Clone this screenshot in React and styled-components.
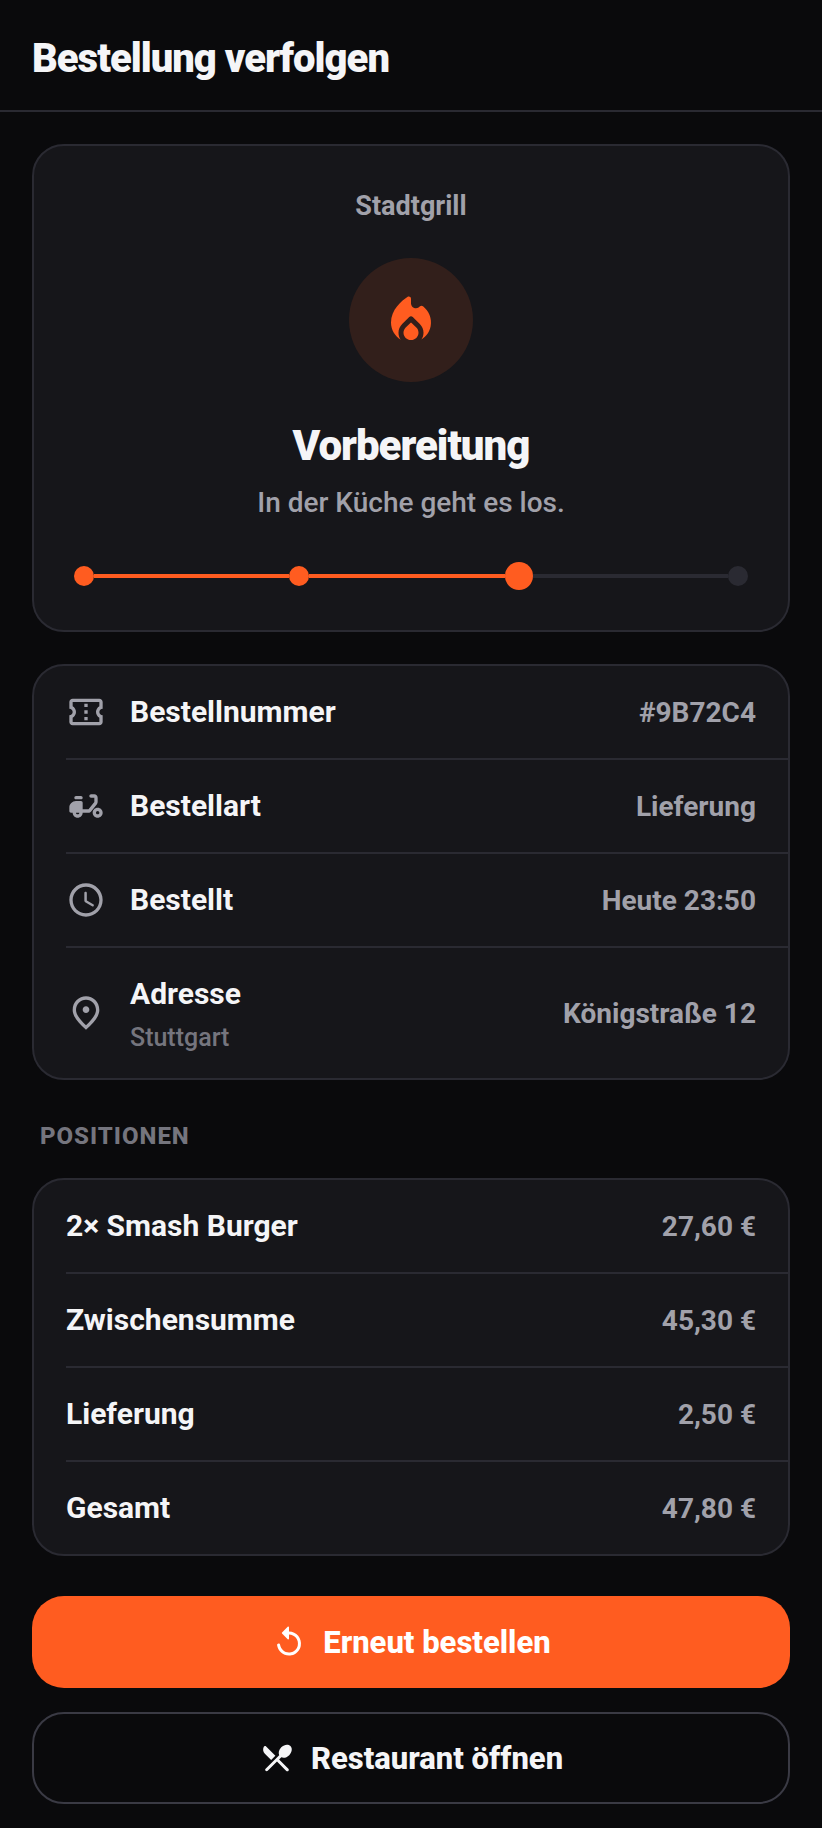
import React from 'react'
import styled, { createGlobalStyle } from 'styled-components'

const order = {
  restaurant: 'Stadtgrill',
  status: 'Vorbereitung',
  hint: 'In der Küche geht es los.',
  steps: ['Eingegangen', 'Bestätigt', 'Vorbereitung', 'Unterwegs'],
  currentStep: 2
}

const items = [
  { label: '2× Smash Burger', value: '27,60 €' },
  { label: 'Zwischensumme', value: '45,30 €' },
  { label: 'Lieferung', value: '2,50 €' },
  { label: 'Gesamt', value: '47,80 €' }
]

const Icon = ({ size, children }) => (
  <svg
    width={size}
    height={size}
    viewBox="0 0 24 24"
    fill="currentColor"
    aria-hidden="true"
  >
    {children}
  </svg>
)

const TicketIcon = () => (
  <Icon size={40}>
    <path d="M22 10V6c0-1.11-.9-2-2-2H4c-1.1 0-1.99.89-1.99 2v4c1.1 0 1.99.9 1.99 2s-.89 2-2 2v4c0 1.1.9 2 2 2h16c1.1 0 2-.9 2-2v-4c-1.1 0-2-.9-2-2s.9-2 2-2zm-2-1.46c-1.19.69-2 1.99-2 3.46s.81 2.77 2 3.46V18H4v-2.54c1.19-.69 2-1.99 2-3.46 0-1.48-.8-2.77-1.99-3.46L4 6h16v2.54zM11 15h2v2h-2zm0-4h2v2h-2zm0-4h2v2h-2z" />
  </Icon>
)

const ScooterIcon = () => (
  <Icon size={40}>
    <path d="M19 7c0-1.1-.9-2-2-2h-2c-.55 0-1 .45-1 1s.45 1 1 1h2v2.65L13.52 14H10v-4c0-.55-.45-1-1-1H6c-2.21 0-4 1.79-4 4v2c0 .55.45 1 1 1h1c0 1.66 1.34 3 3 3s3-1.34 3-3h3.52c.61 0 1.18-.28 1.56-.75l3.48-4.35c.28-.35.44-.8.44-1.25V7zM7 17c-.55 0-1-.45-1-1h2c0 .55-.45 1-1 1z" />
    <path d="M6 6h3c.55 0 1 .45 1 1s-.45 1-1 1H6c-.55 0-1-.45-1-1s.45-1 1-1zM19 13c-1.66 0-3 1.34-3 3s1.34 3 3 3 3-1.34 3-3-1.34-3-3-3zm0 4c-.55 0-1-.45-1-1s.45-1 1-1 1 .45 1 1-.45 1-1 1z" />
  </Icon>
)

const ClockIcon = () => (
  <Icon size={40}>
    <path d="M11.99 2C6.47 2 2 6.48 2 12s4.47 10 9.99 10C17.52 22 22 17.52 22 12S17.52 2 11.99 2zM12 20c-4.42 0-8-3.58-8-8s3.58-8 8-8 8 3.58 8 8-3.58 8-8 8zm-.22-13h-.06c-.4 0-.72.32-.72.72v4.72c0 .35.18.68.49.86l4.15 2.49c.34.2.78.1.98-.24.21-.34.1-.79-.25-.99l-3.87-2.3V7.72c0-.4-.32-.72-.72-.72z" />
  </Icon>
)

const PinIcon = () => (
  <Icon size={40}>
    <path d="M12 12c-1.1 0-2-.9-2-2s.9-2 2-2 2 .9 2 2-.9 2-2 2zm6-1.8C18 6.57 15.35 4 12 4s-6 2.57-6 6.2c0 2.34 1.95 5.44 6 9.14 4.05-3.7 6-6.8 6-9.14zM12 2c4.2 0 8 3.22 8 8.2 0 3.32-2.67 7.25-8 11.8-5.33-4.55-8-8.48-8-11.8C4 5.22 7.8 2 12 2z" />
  </Icon>
)

const FlameIcon = () => (
  <Icon size={60}>
    <path d="M12.35 13.25c-.19-.19-.5-.19-.7 0l-1.78 1.74C9.31 15.55 9 16.28 9 17.06 9 18.68 10.35 20 12 20s3-1.32 3-2.94c0-.78-.31-1.52-.87-2.07z" />
    <path d="M16.8 6.5c-.34-.3-.9-.27-1.2.02C14.38 8.02 12 7.19 12 5.3V3.48c0-.77-.86-1.05-1.46-.67C8.2 4.4 4 7.9 4 13c0 2.92 1.56 5.47 3.89 6.86-.56-.79-.89-1.76-.89-2.8 0-1.32.52-2.56 1.47-3.5l2.83-2.78c.39-.38 1.01-.38 1.4 0l2.83 2.79c.95.93 1.47 2.17 1.47 3.5 0 1.02-.31 1.96-.85 2.75 1.89-1.15 3.29-3.06 3.71-5.3.58-3.15-.72-6.15-3.06-8.02z" />
  </Icon>
)

const ReplayIcon = () => (
  <Icon size={36}>
    <path d="M12 5V2.21c0-.45-.54-.67-.85-.35l-3.8 3.79c-.2.2-.2.51 0 .71l3.79 3.79c.32.31.86.09.86-.36V7c3.73 0 6.68 3.42 5.86 7.29-.47 2.27-2.31 4.1-4.57 4.57-3.57.75-6.75-1.7-7.23-5.01-.07-.48-.49-.85-.98-.85-.6 0-1.08.53-1 1.13.62 4.39 4.8 7.64 9.53 6.72 3.12-.61 5.63-3.12 6.24-6.24C20.84 9.48 16.94 5 12 5z" />
  </Icon>
)

const CutleryIcon = () => (
  <Icon size={36}>
    <path d="M8.1 13.34l2.83-2.83-6.19-6.18c-.48-.48-1.31-.35-1.61.27-.71 1.49-.45 3.32.78 4.56l4.19 4.18zm6.78-1.81c1.53.71 3.68.21 5.27-1.38 1.91-1.91 2.28-4.65.81-6.12-1.46-1.46-4.2-1.1-6.12.81-1.59 1.59-2.09 3.74-1.38 5.27L4.4 19.17c-.39.39-.39 1.02 0 1.41s1.02.39 1.41 0L12 14.41l6.18 6.18c.39.39 1.02.39 1.41 0s.39-1.02 0-1.41L13.41 13l1.47-1.47z" />
  </Icon>
)

const details = [
  { label: 'Bestellnummer', value: '#9B72C4', icon: <TicketIcon /> },
  { label: 'Bestellart', value: 'Lieferung', icon: <ScooterIcon /> },
  { label: 'Bestellt', value: 'Heute 23:50', icon: <ClockIcon /> },
  {
    label: 'Adresse',
    sub: 'Stuttgart',
    value: 'Königstraße 12',
    icon: <PinIcon />
  }
]

const Rows = ({ rows }) => (
  <StyledList>
    {rows.map(({ label, sub, value, icon }) => (
      <StyledRow key={label}>
        <dt>
          {icon}
          <span className="text">
            {label}
            {sub && <small>{sub}</small>}
          </span>
        </dt>
        <dd>{value}</dd>
      </StyledRow>
    ))}
  </StyledList>
)

const Progress = ({ steps, current }) => (
  <StyledProgress>
    {steps.map((step, index) => (
      <React.Fragment key={step}>
        {index > 0 && <StyledLine $done={index <= current} />}
        <StyledDot
          aria-label={step}
          aria-current={index === current ? 'step' : undefined}
          $done={index <= current}
          $current={index === current}
        />
      </React.Fragment>
    ))}
  </StyledProgress>
)

const App = () => {
  return (
    <>
      <GlobalStyle />
      <StyledHeader>
        <h1>Bestellung verfolgen</h1>
      </StyledHeader>
      <StyledMain>
        <StyledStatus>
          <p className="restaurant">{order.restaurant}</p>
          <div className="badge">
            <FlameIcon />
          </div>
          <h2>{order.status}</h2>
          <p>{order.hint}</p>
          <Progress steps={order.steps} current={order.currentStep} />
        </StyledStatus>
        <Rows rows={details} />
        <section>
          <StyledSectionTitle>Positionen</StyledSectionTitle>
          <Rows rows={items} />
        </section>
        <StyledActions>
          <StyledButton type="button" $primary>
            <ReplayIcon />
            Erneut bestellen
          </StyledButton>
          <StyledButton type="button">
            <CutleryIcon />
            Restaurant öffnen
          </StyledButton>
        </StyledActions>
      </StyledMain>
    </>
  )
}

const colors = {
  background: '#0a0a0c',
  card: '#16161a',
  line: '#2a2a32',
  outline: '#3a3a44',
  text: '#f5f5f7',
  muted: '#a1a1aa',
  faint: '#75757e',
  accent: '#ff5c20'
}

const GlobalStyle = createGlobalStyle`
  *,
  *::before {
    box-sizing: border-box;
  }

  body {
    margin: 0;
    background-color: ${colors.background};
    color: ${colors.text};
    font-family: Roboto, sans-serif;
  }

  h1,
  h2,
  h3,
  p,
  dl,
  dd {
    margin: 0;
  }

  svg {
    display: block;
    flex-shrink: 0;
  }
`

const StyledHeader = styled.header`
  padding: 36px 32px 28px;
  border-bottom: 2px solid ${colors.line};

  h1 {
    font-size: 40px;
    line-height: 46px;
    font-weight: 900;
    letter-spacing: -1px;
  }
`

const StyledMain = styled.main`
  display: flex;
  flex-direction: column;
  gap: 32px;
  padding: 32px 32px 24px;
`

const StyledStatus = styled.section`
  display: flex;
  flex-direction: column;
  align-items: center;
  padding: 40px;
  background-color: ${colors.card};
  border: 2px solid ${colors.line};
  border-radius: 32px;
  text-align: center;

  p {
    color: ${colors.muted};
    font-size: 28px;
    line-height: 40px;
    font-weight: 500;
  }

  .restaurant {
    font-size: 27px;
    font-weight: 700;
  }

  .badge {
    display: flex;
    align-items: center;
    justify-content: center;
    width: 124px;
    height: 124px;
    margin: 32px 0 34px;
    border-radius: 50%;
    background-color: #321f1b;
    color: ${colors.accent};
  }

  h2 {
    margin-bottom: 7px;
    font-size: 42px;
    line-height: 60px;
    font-weight: 900;
    letter-spacing: -1px;
  }
`

const StyledProgress = styled.div`
  display: flex;
  align-items: center;
  align-self: stretch;
  margin-top: 39px;
`

const StyledLine = styled.span`
  flex: 1;
  height: 4px;
  background-color: ${({ $done }) => ($done ? colors.accent : colors.line)};
`

const StyledDot = styled.span`
  width: ${({ $current }) => ($current ? 28 : 20)}px;
  height: ${({ $current }) => ($current ? 28 : 20)}px;
  border-radius: 50%;
  background-color: ${({ $done }) => ($done ? colors.accent : colors.line)};
`

const StyledList = styled.dl`
  padding-left: 32px;
  background-color: ${colors.card};
  border: 2px solid ${colors.line};
  border-radius: 32px;
`

const StyledRow = styled.div`
  display: flex;
  align-items: center;
  justify-content: space-between;
  gap: 24px;
  padding: 26px 32px 26px 0;

  & + & {
    border-top: 2px solid ${colors.line};
  }

  dt {
    display: flex;
    align-items: center;
    gap: 24px;
    font-size: 30px;
    line-height: 40px;
    font-weight: 700;
  }

  svg {
    color: ${colors.muted};
  }

  .text {
    display: flex;
    flex-direction: column;
    gap: 10px;
  }

  small {
    color: ${colors.faint};
    font-size: 25px;
    line-height: 28px;
    font-weight: 500;
  }

  dd {
    padding-top: 2px;
    color: ${colors.muted};
    font-size: 28px;
    line-height: 36px;
    font-weight: 700;
    text-align: right;
  }
`

const StyledSectionTitle = styled.h3`
  padding: 10px 8px 28px;
  color: ${colors.faint};
  font-size: 24px;
  line-height: 28px;
  font-weight: 800;
  letter-spacing: 1px;
  text-transform: uppercase;
`

const StyledActions = styled.div`
  display: flex;
  flex-direction: column;
  gap: 24px;
  padding-top: 8px;
`

const StyledButton = styled.button`
  display: flex;
  align-items: center;
  justify-content: center;
  gap: 16px;
  height: 92px;
  padding: 0 32px;
  border: ${({ $primary }) => ($primary ? 'none' : `2px solid ${colors.outline}`)};
  border-radius: 32px;
  background-color: ${({ $primary }) => ($primary ? colors.accent : 'transparent')};
  color: ${({ $primary }) => ($primary ? '#fff' : colors.text)};
  font-family: inherit;
  font-size: 31px;
  font-weight: 800;
  cursor: pointer;
`

export default App
